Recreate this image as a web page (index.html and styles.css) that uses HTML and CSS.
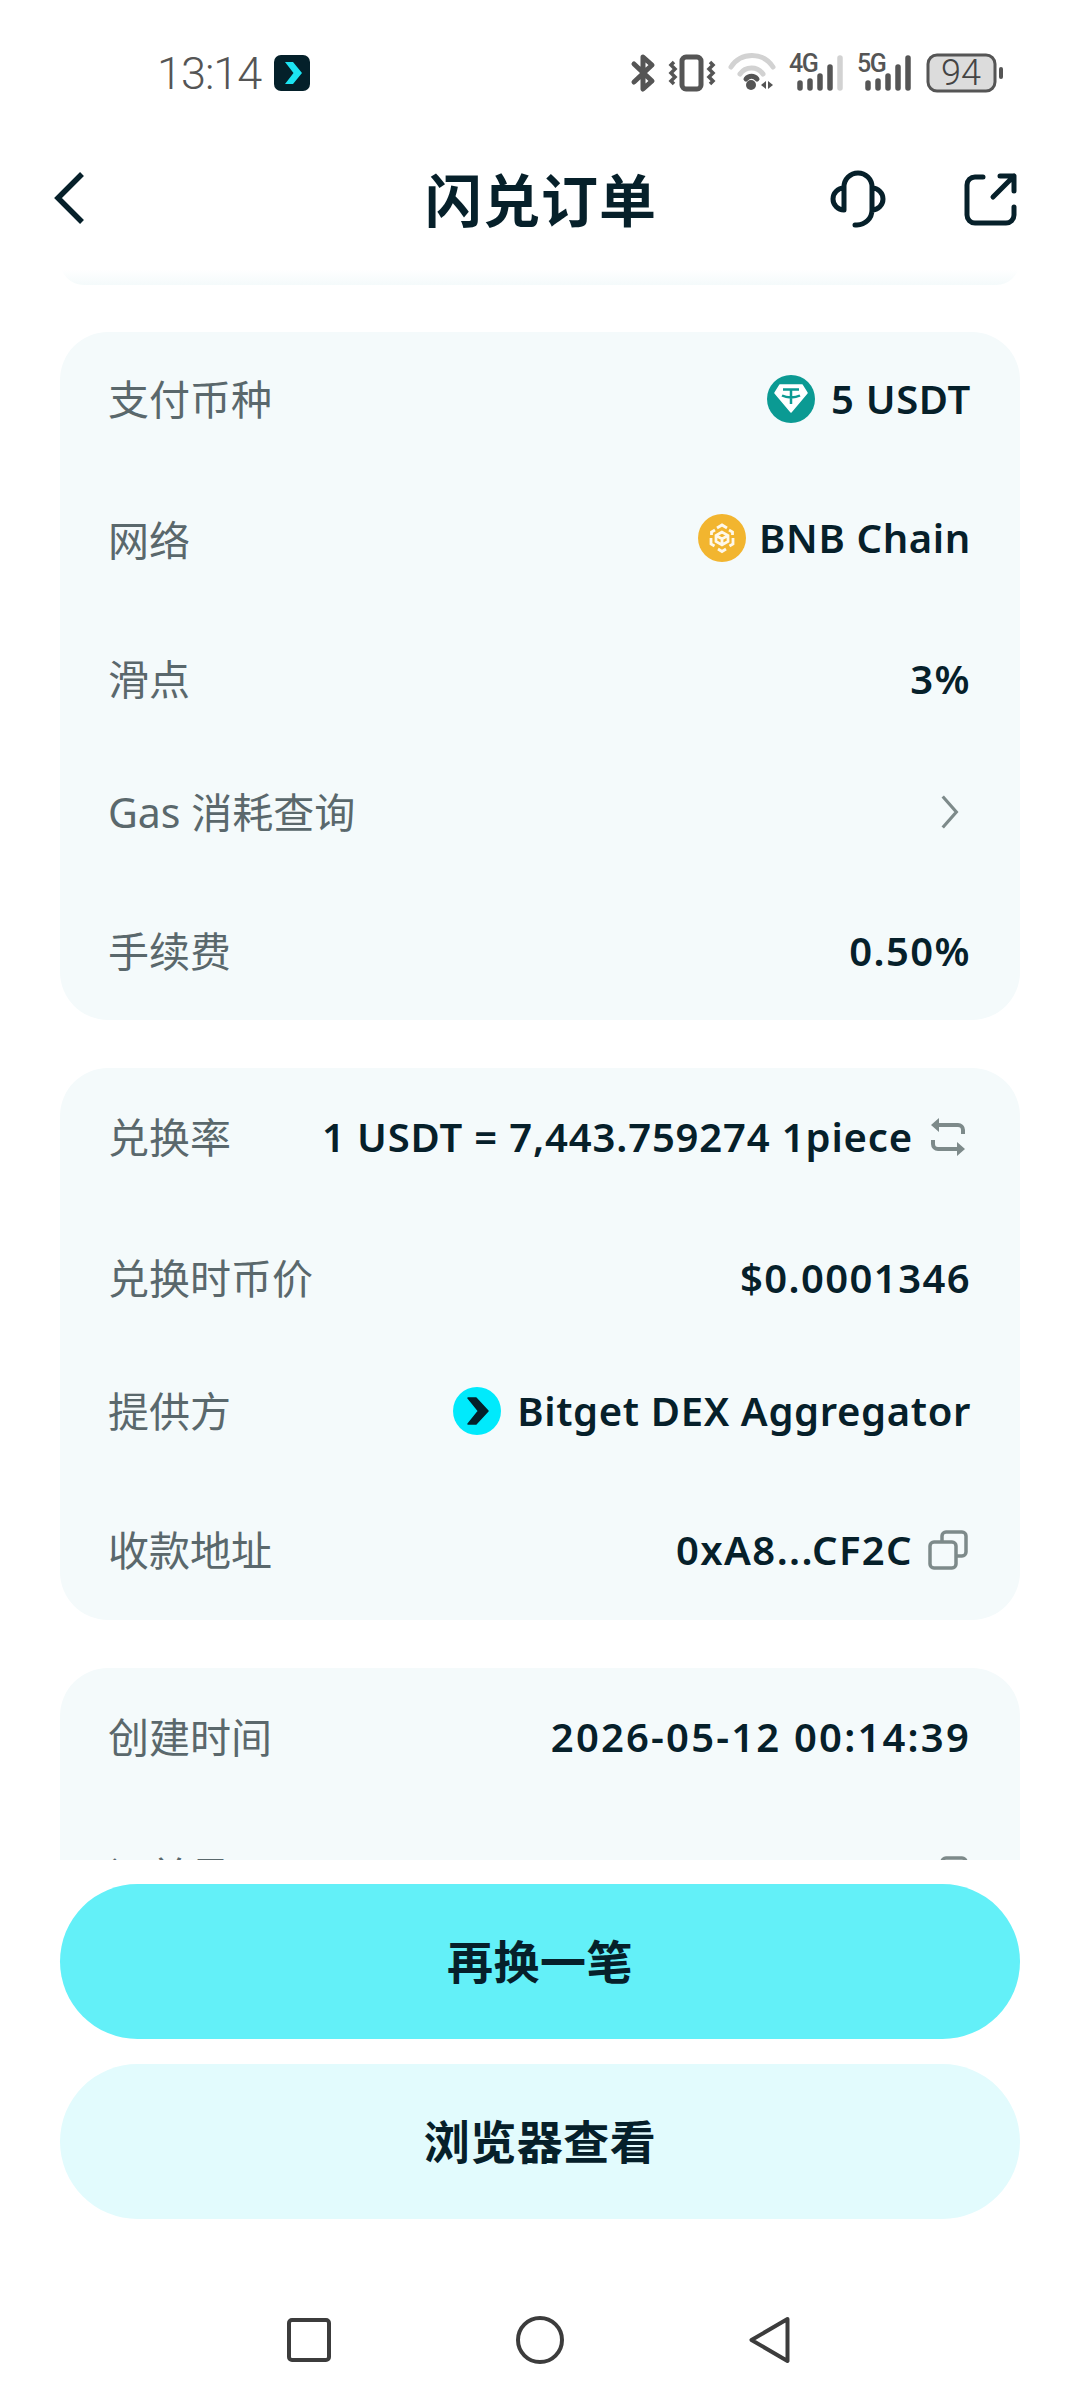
FILE: index.html
```html
<!DOCTYPE html>
<html lang="zh-CN">
<head>
    <meta charset="UTF-8">
    <meta name="viewport" content="width=device-width, initial-scale=1.0">
    <title>闪兑订单</title>
    <link rel="stylesheet" href="styles.css">
</head>
<body>
    <div class="phone">
        <div class="status-bar">
            <span class="clock">13:14</span>
            <svg class="app-badge" viewBox="0 0 36 36">
                <rect width="36" height="36" rx="7" fill="#04202a"/>
                <path d="M11 7h8l9 11-9 11h-8l8.500-11z" fill="#1ce4f2"/>
            </svg>
            <svg class="status-icons" viewBox="630 50 380 46">
                <!-- bluetooth -->
                <path d="M637 64l18 17-9 8V57l9 8-18 17" fill="none" stroke="#555" stroke-width="5" stroke-linejoin="round" stroke-linecap="round"/>
                <!-- vibrate -->
                <rect x="685" y="57" width="19" height="32" rx="4" fill="none" stroke="#555" stroke-width="5"/>
                <path d="M677 62l-3 3 4 4-4 4 4 4-4 4 3 3M713 62l3 3-4 4 4 4-4 4 4 4-3 3" fill="none" stroke="#555" stroke-width="3.500"/>
                <!-- wifi -->
                <path d="M734 67a25 25 0 0 1 42 0" fill="none" stroke="#d2d2d2" stroke-width="5" stroke-linecap="round"/>
                <path d="M743 74a14 14 0 0 1 23 0" fill="none" stroke="#d2d2d2" stroke-width="5" stroke-linecap="round"/>
                <path d="M749 79a7 7 0 0 1 11 0" fill="none" stroke="#555" stroke-width="5" stroke-linecap="round"/>
                <circle cx="754" cy="85" r="5" fill="#555"/>
                <path d="M769 81v8l-5-4zM771 81l5 4-5 4z" fill="#555"/>
                <!-- 4G -->
                <text class="net-label" x="792" y="72">4G</text>
                <g stroke="#555" stroke-width="5.500" stroke-linecap="round">
                    <path d="M803 83v5M813 81v7M823 76v12M833 67v21"/>
                    <path d="M843 58v30" stroke="#d2d2d2"/>
                </g>
                <!-- 5G -->
                <text class="net-label" x="860" y="72">5G</text>
                <g stroke="#555" stroke-width="5.500" stroke-linecap="round">
                    <path d="M871 83v5M881 81v7M891 76v12M901 67v21M911 58v30"/>
                </g>
                <!-- battery -->
                <rect x="931" y="55" width="67" height="36" rx="9" fill="#dcdcdc" stroke="#555" stroke-width="3"/>
                <text class="battery-level" x="964" y="85">94</text>
                <rect x="1002" y="67" width="4" height="12" rx="2" fill="#555"/>
            </svg>
        </div>

        <div class="header">
            <svg class="back-icon" viewBox="50 170 40 60">
                <path d="M82 175l-24 24 24 24" fill="none" stroke="#06202a" stroke-width="5.500"/>
            </svg>
            <h1 class="title">闪兑订单</h1>
            <svg class="support-icon" viewBox="828 170 60 60">
                <path d="M845 211V188a14 14 0 0 1 28 0V211a15 15 0 0 1-15 15h-2M845 189a11 11 0 0 0 0 22M873 189a11 11 0 0 1 0 22" fill="none" stroke="#06202a" stroke-width="5" stroke-linecap="round"/>
            </svg>
            <svg class="share-icon" viewBox="962 172 56 56">
                <path d="M983 178h-8a8 8 0 0 0-8 8v30a8 8 0 0 0 8 8h31a8 8 0 0 0 8-8v-8M993 198l21-21M1000 177h14v15" fill="none" stroke="#06202a" stroke-width="5" stroke-linecap="round" stroke-linejoin="round"/>
            </svg>
        </div>

        <div class="scroll">
            <div class="card card-prev"></div>

            <div class="card card-pay">
                <div class="row">
                    <span class="label">支付币种</span>
                    <span class="value">
                        <svg class="coin" viewBox="0 0 48 48">
                            <circle cx="24" cy="24" r="24" fill="#0b9a93"/>
                            <path d="M13 10h22l5 8-16 19L8 18z" fill="#fff" stroke="#fff" stroke-width="1.500" stroke-linejoin="round"/>
                            <path d="M16 14.500h16M24 15v14M15 20.500c5 2.500 13 2.500 18 0" fill="none" stroke="#0b9a93" stroke-width="2.500"/>
                        </svg>
                        5 USDT
                    </span>
                </div>
                <div class="row row-wide">
                    <span class="label">网络</span>
                    <span class="value value-raised">
                        <svg class="coin coin-tight" viewBox="0 0 48 48">
                            <circle cx="24" cy="24" r="24" fill="#f2b52f"/>
                            <path d="M24 18l-6 3.500v6l6 3.500 6-3.500v-6zM18 21.500l6 3.500 6-3.500M24 25v7M19 14l5-3 5 3M13.500 21v-3l3.500-2M34.500 21v-3l-3.500-2M13 24v6l3.500 2M35 24v6l-3.500 2M20 35l4 2.500 4-2.500" fill="none" stroke="#fff" stroke-width="2.800" opacity="0.9"/>
                        </svg>
                        BNB Chain
                    </span>
                </div>
                <div class="row">
                    <span class="label">滑点</span>
                    <span class="value value-num">3%</span>
                </div>
                <div class="row row-short">
                    <span class="label">Gas 消耗查询</span>
                    <svg class="chevron" viewBox="0 0 22 38">
                        <path d="M3 2l15 17L3 36" fill="none" stroke="#7d8a8a" stroke-width="3.500"/>
                    </svg>
                </div>
                <div class="row">
                    <span class="label">手续费</span>
                    <span class="value value-num">0.50%</span>
                </div>
            </div>

            <div class="card card-info">
                <div class="row">
                    <span class="label">兑换率</span>
                    <span class="value value-rate">
                        1 USDT = 7,443.759274 1piece
                        <svg class="tool-icon" viewBox="0 0 40 40">
                            <path d="M35 17v-4a5 5 0 0 0-5-5H6M5 23v4a5 5 0 0 0 5 5h24" fill="none" stroke="#7d8a8a" stroke-width="4"/>
                            <path d="M11 1L3 8l8 7zM29 25l8 7-8 7z" fill="#7d8a8a"/>
                        </svg>
                    </span>
                </div>
                <div class="row row-wide">
                    <span class="label">兑换时币价</span>
                    <span class="value value-num">$0.0001346</span>
                </div>
                <div class="row row-short">
                    <span class="label">提供方</span>
                    <span class="value">
                        <svg class="coin" viewBox="0 0 48 48">
                            <circle cx="24" cy="24" r="24" fill="#00eafc"/>
                            <path d="M15 11h8l12 13-12 13h-8l10.500-13z" fill="#04202a" stroke="#04202a" stroke-width="1.500" stroke-linejoin="round"/>
                        </svg>
                        Bitget DEX Aggregator
                    </span>
                </div>
                <div class="row">
                    <span class="label">收款地址</span>
                    <span class="value value-num">
                        0xA8...CF2C
                        <svg class="tool-icon" viewBox="0 0 40 40">
                            <rect x="2" y="12" width="26" height="26" rx="4" fill="none" stroke="#7d8a8a" stroke-width="3.500"/>
                            <path d="M14 12V6a4 4 0 0 1 4-4h16a4 4 0 0 1 4 4v16a4 4 0 0 1-4 4h-6" fill="none" stroke="#7d8a8a" stroke-width="3.500"/>
                        </svg>
                    </span>
                </div>
            </div>

            <div class="card card-meta">
                <div class="row">
                    <span class="label">创建时间</span>
                    <span class="value value-date">2026-05-12 00:14:39</span>
                </div>
                <div class="row">
                    <span class="label">订单号</span>
                    <span class="value">
                        0xf3a...8ff25
                        <svg class="tool-icon" viewBox="0 0 40 40">
                            <rect x="2" y="12" width="26" height="26" rx="4" fill="none" stroke="#7d8a8a" stroke-width="3.500"/>
                            <path d="M14 12V6a4 4 0 0 1 4-4h16a4 4 0 0 1 4 4v16a4 4 0 0 1-4 4h-6" fill="none" stroke="#7d8a8a" stroke-width="3.500"/>
                        </svg>
                    </span>
                </div>
            </div>
        </div>

        <div class="footer">
            <button class="btn btn-primary">再换一笔</button>
            <button class="btn btn-secondary">浏览器查看</button>
            <div class="nav-bar">
                <svg class="nav-square" viewBox="0 0 44 44">
                    <rect x="2" y="2" width="40" height="40" rx="3" fill="none" stroke="#3c3c3c" stroke-width="4"/>
                </svg>
                <svg class="nav-circle" viewBox="0 0 48 48">
                    <circle cx="24" cy="24" r="22" fill="none" stroke="#3c3c3c" stroke-width="4"/>
                </svg>
                <svg class="nav-back" viewBox="0 0 41 48">
                    <path d="M38.500 3L2.500 24l36 21z" fill="none" stroke="#3c3c3c" stroke-width="4" stroke-linejoin="round"/>
                </svg>
            </div>
        </div>
    </div>
</body>
</html>
```

FILE: styles.css
```css
body {
    margin: 0;
    background-color: #fff;
    font-family: "Noto Sans", "Noto Sans CJK SC", sans-serif;
    color: #06202a;
}

.phone {
    width: 1080px;
    height: 2400px;
    display: flex;
    flex-direction: column;
    overflow: hidden;
}

/* status bar */
.status-bar {
    height: 146px;
    padding-left: 157px;
    display: flex;
    align-items: center;
    box-sizing: border-box;
}
.clock {
    font-family: Roboto, sans-serif;
    font-weight: 300;
    font-size: 45px;
    letter-spacing: -1px;
    color: #555;
}
.app-badge {
    width: 36px;
    height: 36px;
    margin-left: 13px;
}
.status-icons {
    width: 380px;
    height: 46px;
    margin-left: 317px;
}
.net-label {
    font-family: Roboto, sans-serif;
    font-weight: 500;
    font-size: 25px;
    letter-spacing: -1.5px;
    fill: #555;
}
.battery-level {
    font-family: Roboto, sans-serif;
    font-weight: 300;
    font-size: 36px;
    text-anchor: middle;
    fill: #444;
}

/* title bar */
.header {
    height: 124px;
    padding-bottom: 18px;
    display: flex;
    align-items: center;
    box-sizing: border-box;
}
.back-icon {
    width: 40px;
    height: 60px;
    margin-left: 50px;
}
.title {
    margin: 0 0 4px 335px;
    font-family: "Noto Sans CJK SC", sans-serif;
    font-size: 57px;
    font-weight: 700;
    line-height: 80px;
    letter-spacing: 1px;
}
.support-icon {
    width: 60px;
    height: 60px;
    margin-left: 170px;
}
.share-icon {
    width: 56px;
    height: 56px;
    margin-left: 75px;
}

/* scrolling cards */
.scroll {
    height: 1590px;
    overflow: hidden;
}
.card {
    margin: 0 60px 48px 60px;
    border-radius: 48px;
    background-color: #f4fafb;
    box-sizing: border-box;
    padding: 0 49px 0 48px;
}
.card-prev {
    height: 48px;
    margin-top: -33px;
    margin-bottom: 47px;
    background: linear-gradient(#fff 68%, #f4fafb);
}
.card-pay {
    height: 688px;
    padding-top: 44px;
}
.card-info {
    height: 552px;
    padding-top: 46px;
}
.card-meta {
    height: 400px;
    padding-top: 46px;
}
.row {
    height: 46px;
    margin-top: 93px;
    display: flex;
    justify-content: space-between;
    align-items: center;
    white-space: nowrap;
}
.row:first-child {
    margin-top: 0;
}
.row-short {
    margin-top: 87px;
}
.row-wide {
    margin-top: 95px;
}
.label {
    font-size: 41px;
    line-height: 46px;
    color: #5a686c;
}
.value {
    display: flex;
    align-items: center;
    font-size: 40px;
    font-weight: 600;
    line-height: 46px;
    letter-spacing: 0.65px;
}
.value-raised {
    margin-top: -5px;
}
.value-rate {
    letter-spacing: 0.85px;
}
.value-num {
    letter-spacing: 1.4px;
}
.value-date {
    letter-spacing: 2.2px;
}
.coin {
    width: 48px;
    height: 48px;
    margin-right: 16px;
}
.coin-tight {
    margin-right: 13px;
}
.tool-icon {
    width: 40px;
    height: 40px;
    margin: 0 3px 0 15px;
}
.chevron {
    width: 20px;
    height: 36px;
    margin-right: 11px;
}

/* bottom buttons */
.footer {
    flex: 1;
    padding: 24px 60px 0 60px;
    background-color: #fff;
    display: flex;
    flex-direction: column;
    gap: 25px;
}
.btn {
    height: 155px;
    padding: 0 0 5px 0;
    border: none;
    border-radius: 78px;
    font-family: "Noto Sans CJK SC", sans-serif;
    font-size: 46px;
    font-weight: 700;
    letter-spacing: 0.5px;
    color: #06202a;
}
.btn-primary {
    background-color: #63f0f8;
}
.btn-secondary {
    background-color: #e2fbfd;
}
.nav-bar {
    margin: 72px 0 0 227px;
    display: flex;
    align-items: center;
    gap: 185px;
}
.nav-square {
    width: 44px;
    height: 44px;
}
.nav-circle {
    width: 48px;
    height: 48px;
}
.nav-back {
    width: 41px;
    height: 48px;
}
```
